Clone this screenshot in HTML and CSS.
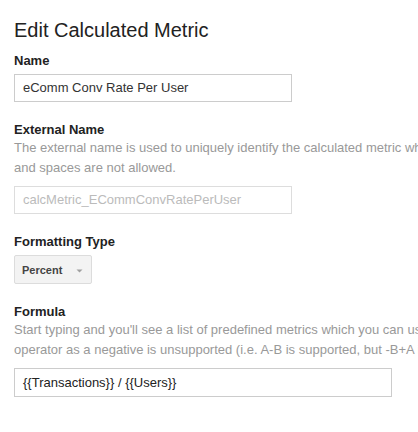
FILE: index.html
```html
<!DOCTYPE html>
<html>
<head>
<meta charset="utf-8">
<link rel="stylesheet" href="styles.css">
</head>
<body>
<div class="page">
  <h1 class="title">Edit Calculated Metric</h1>

  <section class="field field-first">
    <div class="label">Name</div>
    <div class="input input-name">eComm Conv Rate Per User</div>
  </section>

  <section class="field">
    <div class="label">External Name</div>
    <div class="desc">
      <div class="desc-line">The external name is used to uniquely identify the calculated metric when used in the API. Special characters</div>
      <div class="desc-line">and spaces are not allowed.</div>
    </div>
    <div class="input input-name input-disabled">calcMetric_ECommConvRatePerUser</div>
  </section>

  <section class="field">
    <div class="label">Formatting Type</div>
    <div class="select-btn">
      <span class="select-text">Percent</span>
      <svg class="caret" width="7" height="4" viewBox="0 0 7 4"><path d="M0.5 0.5 L6.5 0.5 L3.5 3.5 Z" fill="#a0a0a0"/></svg>
    </div>
  </section>

  <section class="field">
    <div class="label">Formula</div>
    <div class="desc">
      <div class="desc-line">Start typing and you'll see a list of predefined metrics which you can use in your formula. Using the subtraction</div>
      <div class="desc-line">operator as a negative is unsupported (i.e. A-B is supported, but -B+A is not).</div>
    </div>
    <div class="input input-formula">{{Transactions}} / {{Users}}</div>
  </section>
</div>
</body>
</html>
```

FILE: styles.css
```css
html, body {
  margin: 0;
  padding: 0;
  background: #ffffff;
  overflow: hidden;
}

body {
  width: 418px;
  height: 432px;
  font-family: "Liberation Sans", Arial, sans-serif;
  color: #222222;
}

.page {
  width: 900px;
  padding: 18px 0 0 14px;
  display: flex;
  flex-direction: column;
}

.title {
  margin: 0;
  font-size: 20px;
  font-weight: normal;
  line-height: 24px;
  color: #222222;
}

.field {
  display: flex;
  flex-direction: column;
  align-items: flex-start;
  margin-top: 20px;
}

.field-first {
  margin-top: 11px;
}

.label {
  font-size: 13px;
  font-weight: bold;
  line-height: 16px;
  color: #222222;
}

.desc {
  font-size: 13px;
  line-height: 20px;
  color: #999999;
  margin-bottom: 2px;
}

.desc-line {
  white-space: nowrap;
}

.input {
  box-sizing: border-box;
  margin-top: 5px;
  height: 28px;
  border: 1px solid #cccccc;
  padding: 0 8px;
  font-size: 13px;
  line-height: 26px;
  color: #333333;
  background: #ffffff;
  white-space: nowrap;
}

.desc + .input {
  margin-top: 6px;
}

.input-name {
  width: 278px;
}

.input-disabled {
  border-color: #dddddd;
  color: #bbbbbb;
}

.input-formula {
  width: 378px;
  height: 29px;
  line-height: 27px;
  color: #222222;
}

.select-btn {
  box-sizing: border-box;
  margin-top: 5px;
  width: 78px;
  height: 29px;
  border: 1px solid #dcdcdc;
  border-radius: 2px;
  background: #f3f3f3;
  display: flex;
  align-items: center;
  justify-content: space-between;
  padding: 0 8px 0 7px;
}

.select-text {
  font-size: 11px;
  font-weight: bold;
  color: #444444;
  line-height: 14px;
}

.caret {
  display: block;
  margin-top: 2px;
}
```
